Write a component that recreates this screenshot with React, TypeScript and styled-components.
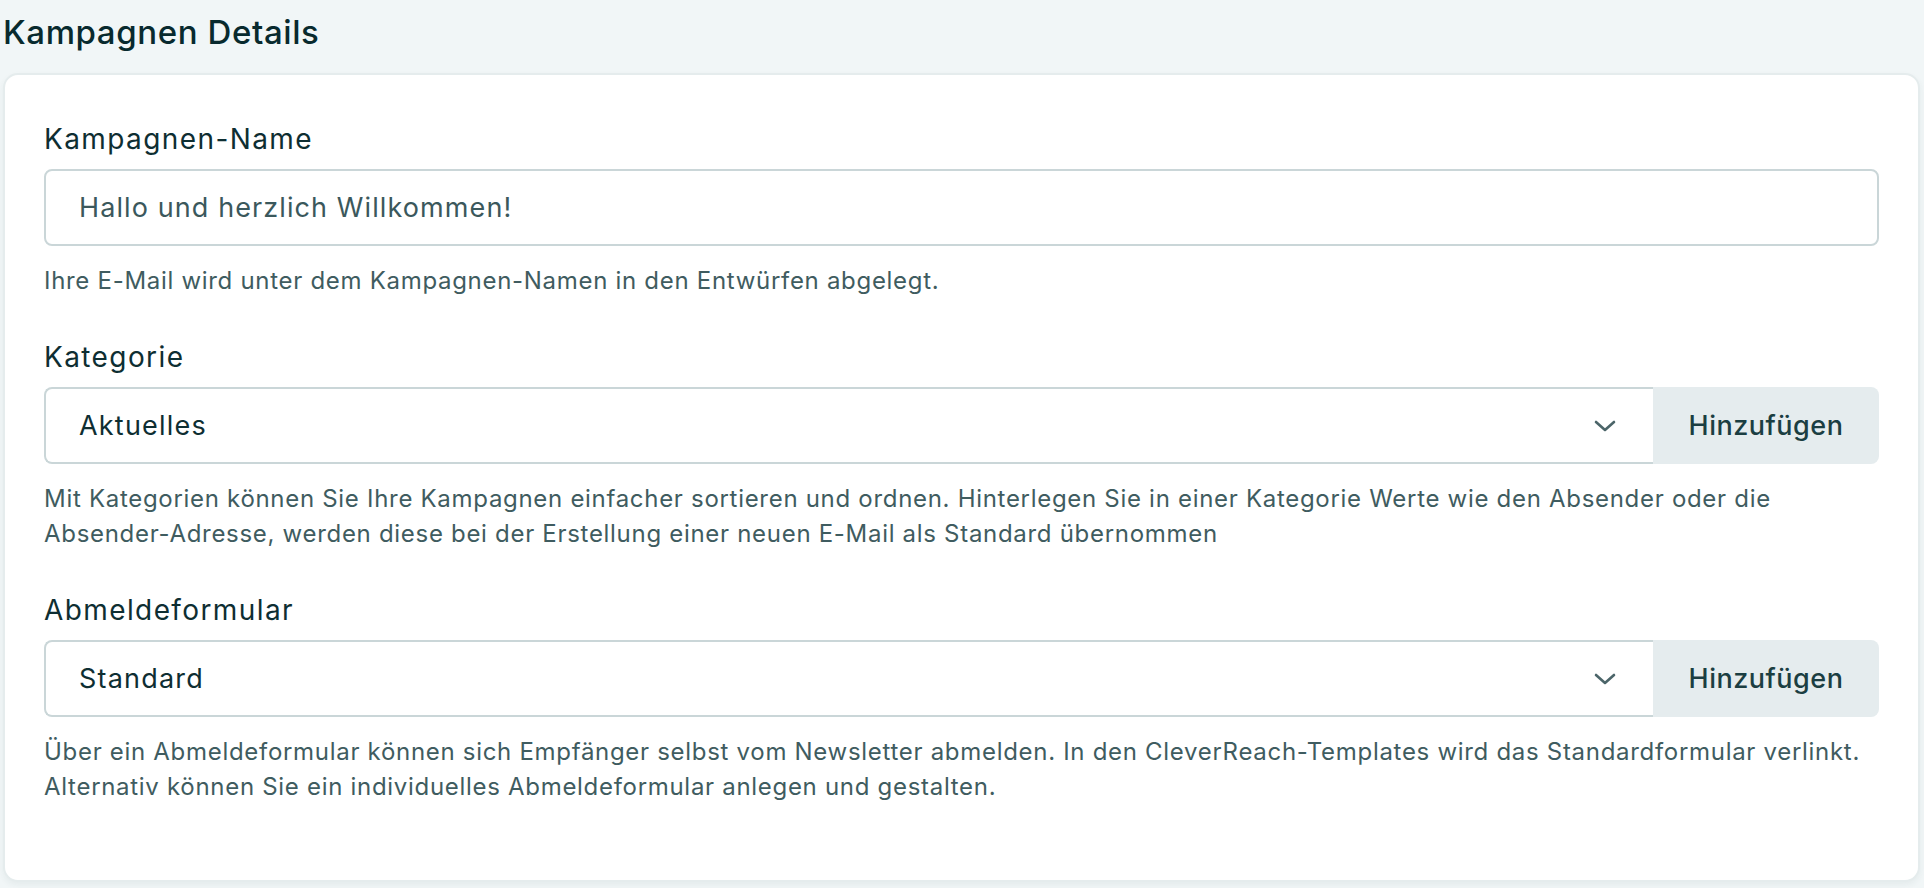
import React, { type ReactElement } from "react";
import styled, { createGlobalStyle } from "styled-components";

const GlobalStyle = createGlobalStyle`
  html, body {
    margin: 0;
    padding: 0;
    background: #f1f6f7;
  }
  body {
    font-family: Inter, "Noto Sans", "DejaVu Sans", sans-serif;
    -webkit-font-smoothing: antialiased;
  }
  * {
    box-sizing: border-box;
  }
`;

const Page = styled.div`
  padding: 12px 4px 6px 3px;
  min-height: 888px;
`;

const Title = styled.h1`
  margin: 0 0 21px 0;
  font-size: 33px;
  line-height: 40px;
  font-weight: 500;
  letter-spacing: 0.6px;
  color: #082a2e;
`;

const Card = styled.section`
  background: #ffffff;
  border: 2px solid #e5eced;
  border-radius: 15px;
  box-shadow: 0 3px 6px rgba(30, 60, 65, 0.06);
  padding: 46px 39px 76px 39px;
  display: flex;
  flex-direction: column;
  gap: 41px;
`;

const Field = styled.div`
  display: flex;
  flex-direction: column;
`;

const Label = styled.label`
  font-size: 28px;
  line-height: 36px;
  font-weight: 400;
  letter-spacing: 1.4px;
  color: #0e2e32;
  margin-bottom: 12px;
`;

const TextInput = styled.input`
  height: 77px;
  width: 100%;
  border: 2px solid #cad6d8;
  border-radius: 8px;
  padding: 0 33px;
  font-family: inherit;
  font-size: 27px;
  letter-spacing: 1.1px;
  color: #3b585c;
  background: #ffffff;
  outline: none;
`;

const SelectRow = styled.div`
  display: flex;
  height: 77px;
`;

const SelectBox = styled.div`
  flex: 1;
  display: flex;
  align-items: center;
  justify-content: space-between;
  border: 2px solid #cad6d8;
  border-right: none;
  border-radius: 8px 0 0 8px;
  padding: 0 37px 0 33px;
  font-size: 27px;
  letter-spacing: 1.2px;
  color: #0e2e32;
  cursor: pointer;
`;

const AddButton = styled.button`
  width: 226px;
  border: none;
  border-radius: 0 8px 8px 0;
  background: #e5ecee;
  font-family: inherit;
  font-size: 27px;
  font-weight: 500;
  letter-spacing: 0.5px;
  color: #1b3e42;
  cursor: pointer;
`;

const Hint = styled.p`
  margin: 17px 0 0 0;
  font-size: 24px;
  line-height: 35px;
  letter-spacing: 0.7px;
  color: #3f5c60;
`;

function Chevron(): ReactElement {
  return (
    <svg width="22" height="12" viewBox="0 0 22 12" fill="none">
      <polyline
        points="2,2 11,10 20,2"
        stroke="#4b6569"
        strokeWidth="2.6"
        strokeLinecap="round"
        strokeLinejoin="round"
      />
    </svg>
  );
}

function SelectField({ label, value }: { label: string; value: string }): ReactElement {
  return (
    <>
      <Label>{label}</Label>
      <SelectRow>
        <SelectBox>
          <span>{value}</span>
          <Chevron />
        </SelectBox>
        <AddButton type="button">Hinzufügen</AddButton>
      </SelectRow>
    </>
  );
}

export default function App(): ReactElement {
  return (
    <Page>
      <GlobalStyle />
      <Title>Kampagnen Details</Title>
      <Card>
        <Field>
          <Label htmlFor="name">Kampagnen-Name</Label>
          <TextInput id="name" defaultValue="Hallo und herzlich Willkommen!" />
          <Hint>Ihre E-Mail wird unter dem Kampagnen-Namen in den Entwürfen abgelegt.</Hint>
        </Field>
        <Field>
          <SelectField label="Kategorie" value="Aktuelles" />
          <Hint>
            Mit Kategorien können Sie Ihre Kampagnen einfacher sortieren und ordnen. Hinterlegen Sie in
            einer Kategorie Werte wie den Absender oder die
            <br />
            Absender-Adresse, werden diese bei der Erstellung einer neuen E-Mail als Standard übernommen
          </Hint>
        </Field>
        <Field>
          <SelectField label="Abmeldeformular" value="Standard" />
          <Hint>
            Über ein Abmeldeformular können sich Empfänger selbst vom Newsletter abmelden. In den
            CleverReach-Templates wird das Standardformular verlinkt.
            <br />
            Alternativ können Sie ein individuelles Abmeldeformular anlegen und gestalten.
          </Hint>
        </Field>
      </Card>
    </Page>
  );
}
